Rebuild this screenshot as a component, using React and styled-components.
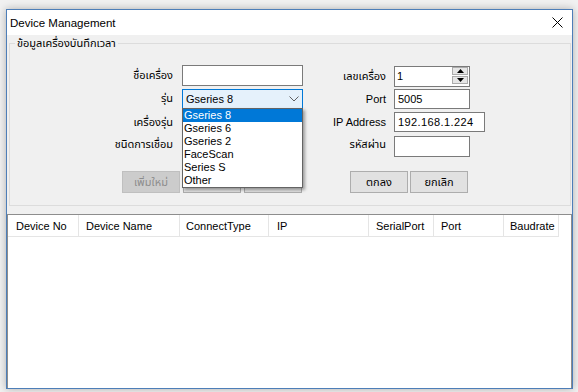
import React from 'react';
import styled, { createGlobalStyle } from 'styled-components';

const FONT = `"Liberation Sans", "Noto Sans Thai", "Noto Sans Thai UI", "Tahoma", "Loma", "Garuda", "Waree", "Tlwg Typo", "Noto Sans", "DejaVu Sans", sans-serif`;

const GlobalStyle = createGlobalStyle`
  html, body { margin: 0; padding: 0; }
  body {
    background: #f1f1f1;
    font-family: ${FONT};
    font-size: 11px;
    color: #000;
    width: 578px;
    height: 392px;
    overflow: hidden;
  }
  * { box-sizing: border-box; }
`;

const Window = styled.div`
  margin: 9px 0 0 6px;
  width: 567px;
  height: 380px;
  border: 1px solid #4d7eb8;
  box-shadow: 0 0 8px rgba(0, 0, 0, 0.28);
  display: flex;
  flex-direction: column;
  background: #f0f0f0;
`;

const TitleBar = styled.div`
  flex: none;
  height: 25px;
  background: #fff;
  display: flex;
  align-items: center;
  justify-content: space-between;
  padding: 0 9px 0 3px;
`;

const Title = styled.span`
  font-size: 11.5px;
  color: #000;
`;

const Body = styled.div`
  flex: 1;
  display: flex;
  flex-direction: column;
`;

const Group = styled.div`
  position: relative;
  margin: 8px 1px 0 2px;
  height: 163px;
  border: 1px solid #dcdcdc;
  flex: none;
`;

const Legend = styled.span`
  position: absolute;
  top: -8px;
  left: 5px;
  padding: 0 2px;
  background: #f0f0f0;
  line-height: 15px;
`;

const Form = styled.div`
  display: grid;
  grid-template-columns: 172px 121px 91px auto;
  grid-template-rows: repeat(4, 23px) auto;
  align-items: center;
  padding-top: 20px;
`;

const Label = styled.div`
  text-align: right;
  padding-right: ${(p) => p.$pad}px;
  margin-top: ${(p) => p.$dy || 0}px;
  white-space: nowrap;
`;

const TextBox = styled.div`
  width: ${(p) => p.$w}px;
  height: ${(p) => p.$h || 20}px;
  margin-top: ${(p) => p.$dy || 0}px;
  background: #fff;
  border: 1px solid #7a7a7a;
  padding-left: 3px;
  display: flex;
  align-items: center;
  letter-spacing: ${(p) => (p.$mono ? '0.4px' : '0')};
`;

const ComboWrap = styled.div`
  position: relative;
  width: 121px;
  height: 20px;
`;

const Combo = styled.div`
  width: 121px;
  height: 20px;
  background: #e5f1fb;
  border: 1px solid #0078d7;
  display: flex;
  align-items: center;
  justify-content: space-between;
  padding: 0 3px 0 3px;
`;

const DropList = styled.div`
  position: absolute;
  top: 19px;
  left: 0;
  width: 121px;
  z-index: 10;
  background: #fff;
  border: 1px solid #646464;
  box-shadow: 2px 2px 3px rgba(0, 0, 0, 0.35);
`;

const DropItem = styled.div`
  height: 13px;
  line-height: 13px;
  padding-left: 1px;
  background: ${(p) => (p.$active ? '#0078d7' : 'transparent')};
  color: ${(p) => (p.$active ? '#fff' : '#000')};
`;

const NumBox = styled.div`
  width: 76px;
  height: 21px;
  margin-top: 1px;
  background: #fff;
  border: 1px solid #7a7a7a;
  display: flex;
  align-items: flex-start;
`;

const NumValue = styled.span`
  flex: 1;
  padding: 3px 0 0 2px;
`;

const Spin = styled.div`
  display: flex;
  flex-direction: column;
  width: 16px;
  margin: 0 1px 0 0;
`;

const SpinBtn = styled.div`
  height: 8px;
  background: #e6e6e6;
  border: 1px solid #acacac;
  margin-top: ${(p) => (p.$down ? '1px' : '0')};
  display: flex;
  align-items: center;
  justify-content: center;
`;

const ButtonBar = styled.div`
  grid-column: 1 / -1;
  display: flex;
  margin-top: 15px;
  padding-left: 112px;
`;

const BtnGroup = styled.div`
  display: flex;
  gap: ${(p) => p.$gap}px;
  margin-left: ${(p) => p.$ml || 0}px;
`;

const Button = styled.div`
  width: 58px;
  height: 22px;
  display: flex;
  align-items: center;
  justify-content: center;
  background: ${(p) => (p.$disabled ? '#cccccc' : '#e1e1e1')};
  border: 1px solid ${(p) => (p.$disabled ? '#bfbfbf' : '#adadad')};
  color: ${(p) => (p.$disabled ? '#8c8c8c' : '#000')};
`;

const List = styled.div`
  flex: 1;
  margin-top: 8px;
  background: #fff;
  border: 1px solid #8d8d8d;
  border-bottom: none;
`;

const HeaderRow = styled.div`
  display: flex;
`;

const HeaderCell = styled.div`
  width: ${(p) => p.$w}px;
  height: 22px;
  padding-left: ${(p) => p.$pl}px;
  display: flex;
  align-items: center;
  border-right: 1px solid #e5e5e5;
  border-bottom: 1px solid #e5e5e5;
  white-space: nowrap;
`;

const CloseIcon = () => (
  <svg width="11" height="11" viewBox="0 0 11 11">
    <path d="M0.5 0.5 L10.5 10.5 M10.5 0.5 L0.5 10.5" stroke="#000" strokeWidth="1" fill="none" />
  </svg>
);

const Chevron = () => (
  <svg width="10" height="6" viewBox="0 0 10 6">
    <path d="M0.5 0.5 L5 5 L9.5 0.5" stroke="#606060" strokeWidth="1" fill="none" />
  </svg>
);

const Tri = ({ down }) => (
  <svg width="7" height="4" viewBox="0 0 7 4">
    <path d={down ? 'M0 0 L7 0 L3.5 4 Z' : 'M0 4 L7 4 L3.5 0 Z'} fill="#000" />
  </svg>
);

const models = ['Gseries 8', 'Gseries 6', 'Gseries 2', 'FaceScan', 'Series S', 'Other'];

const columns = [
  { name: 'Device No', w: 71, pl: 8 },
  { name: 'Device Name', w: 101, pl: 7 },
  { name: 'ConnectType', w: 89, pl: 6 },
  { name: 'IP', w: 100, pl: 8 },
  { name: 'SerialPort', w: 65, pl: 7 },
  { name: 'Port', w: 70, pl: 7 },
  { name: 'Baudrate', w: 55, pl: 6 },
];

export default function App() {
  return (
    <>
      <GlobalStyle />
      <Window>
        <TitleBar>
          <Title>Device Management</Title>
          <CloseIcon />
        </TitleBar>
        <Body>
          <Group>
            <Legend>ข้อมูลเครื่องบันทึกเวลา</Legend>
            <Form>
              <Label $pad={9}>ชื่อเครื่อง</Label>
              <TextBox $w={121} $h={21} />
              <Label $pad={8} $dy={2}>เลขเครื่อง</Label>
              <NumBox>
                <NumValue>1</NumValue>
                <Spin>
                  <SpinBtn><Tri /></SpinBtn>
                  <SpinBtn $down><Tri down /></SpinBtn>
                </Spin>
              </NumBox>

              <Label $pad={9}>รุ่น</Label>
              <ComboWrap>
                <Combo>
                  <span>Gseries 8</span>
                  <Chevron />
                </Combo>
                <DropList>
                  {models.map((m, i) => (
                    <DropItem key={m} $active={i === 0}>{m}</DropItem>
                  ))}
                </DropList>
              </ComboWrap>
              <Label $pad={8}>Port</Label>
              <TextBox $w={76}>5005</TextBox>

              <Label $pad={9} $dy={2}>เครื่องรุ่น</Label>
              <TextBox $w={121} />
              <Label $pad={8}>IP Address</Label>
              <TextBox $w={91} $mono>192.168.1.224</TextBox>

              <Label $pad={9}>ชนิดการเชื่อม</Label>
              <TextBox $w={121} />
              <Label $pad={8}>รหัสผ่าน</Label>
              <TextBox $w={76} $h={21} $dy={4} />

              <ButtonBar>
                <BtnGroup $gap={3}>
                  <Button $disabled>เพิ่มใหม่</Button>
                  <Button aria-label="แก้ไข" />
                  <Button aria-label="ลบ" />
                </BtnGroup>
                <BtnGroup $gap={2} $ml={48}>
                  <Button>ตกลง</Button>
                  <Button>ยกเลิก</Button>
                </BtnGroup>
              </ButtonBar>
            </Form>
          </Group>
          <List>
            <HeaderRow>
              {columns.map((c) => (
                <HeaderCell key={c.name} $w={c.w} $pl={c.pl}>{c.name}</HeaderCell>
              ))}
            </HeaderRow>
          </List>
        </Body>
      </Window>
    </>
  );
}
